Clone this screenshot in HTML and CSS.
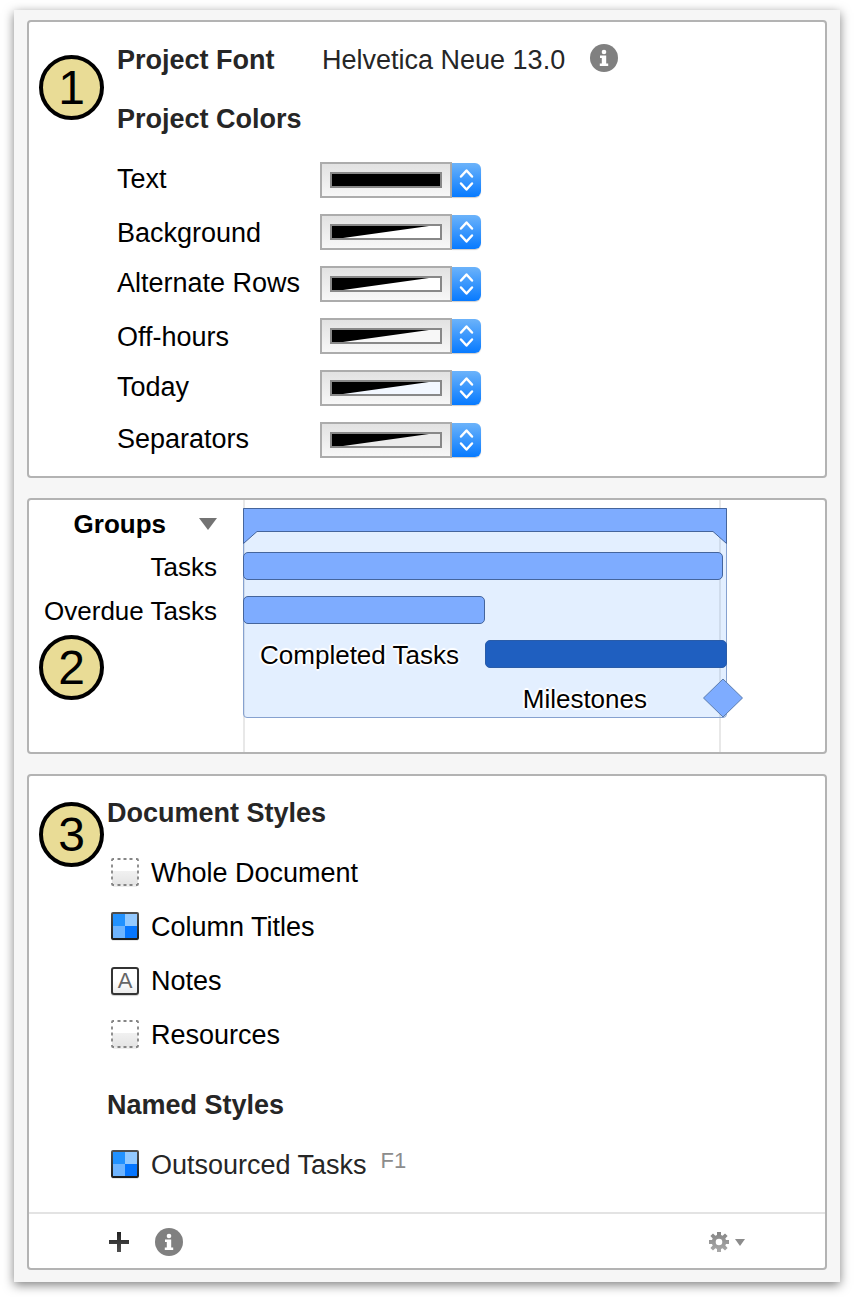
FILE: index.html
```html
<!DOCTYPE html>
<html lang="en">
<head>
    <meta charset="UTF-8">
    <meta name="viewport" content="width=device-width, initial-scale=1.0">
    <title>Project Styles</title>
    <link rel="stylesheet" href="styles.css">
</head>
<body>
    <!-- shared icons -->
    <svg class="defs" width="0" height="0" aria-hidden="true">
        <defs>
            <linearGradient id="fade" x1="0" y1="0" x2="0" y2="1">
                <stop offset="0.45" stop-color="#fff"/>
                <stop offset="0.46" stop-color="#f1f1f1"/>
                <stop offset="1" stop-color="#e4e4e4"/>
            </linearGradient>
            <linearGradient id="frame" x1="0" y1="0" x2="0" y2="1">
                <stop offset="0" stop-color="#505050"/>
                <stop offset="1" stop-color="#1c1c1c"/>
            </linearGradient>
            <linearGradient id="gear-fill" x1="0" y1="0" x2="0" y2="1">
                <stop offset="0" stop-color="#858585"/>
                <stop offset="1" stop-color="#aaa"/>
            </linearGradient>
            <linearGradient id="plus-fill" x1="0" y1="0" x2="0" y2="1">
                <stop offset="0" stop-color="#222"/>
                <stop offset="1" stop-color="#505050"/>
            </linearGradient>
        </defs>
        <symbol id="info" viewBox="0 0 28 28">
            <circle cx="14" cy="14" r="14" fill="#808080"/>
            <circle cx="14" cy="8" r="2.3" fill="#fff"/>
            <path d="M10 11.500h6.200v8h2V22H9.800v-2.500h2V14H10z" fill="#fff"/>
        </symbol>
        <symbol id="arrows" viewBox="0 0 29 34">
            <path d="M9 13.500l5.500-6 5.500 6M9 20.500l5.500 6 5.500-6" fill="none" stroke="#fff" stroke-width="2.500" stroke-linecap="round" stroke-linejoin="round"/>
        </symbol>
        <symbol id="ramp" viewBox="0 0 108 12">
            <path d="M0 0h97L11 12H0z"/>
        </symbol>
        <symbol id="style-none" viewBox="0 0 28 30">
            <rect x="2" y="26" width="24" height="3" fill="#eee"/>
            <rect x="1" y="1" width="26" height="26" rx="1" fill="url(#fade)"/>
            <path d="M1 3V2Q1 1 2 1H3M25 1h1q1 0 1 1v1M27 25v1q0 1-1 1h-1M3 27H2q-1 0-1-1v-1M6.500 1h3M12.500 1h3M18.500 1h3M6.500 27h3M12.500 27h3M18.500 27h3M1 6.500v3M1 12.500v3M1 18.500v3M27 6.500v3M27 12.500v3M27 18.500v3" fill="none" stroke="#858585" stroke-width="1.800"/>
        </symbol>
        <symbol id="style-fill" viewBox="0 0 28 30">
            <rect x="1" y="27" width="26" height="2" fill="#e8e8e8"/>
            <rect width="28" height="28" rx="2" fill="url(#frame)"/>
            <rect x="2" y="2" width="12" height="12" fill="#2292ff"/>
            <rect x="14" y="2" width="12" height="12" fill="#93c9ff"/>
            <rect x="2" y="14" width="12" height="12" fill="#6eb4ff"/>
            <rect x="14" y="14" width="12" height="12" fill="#0676ff"/>
        </symbol>
    </svg>

    <main class="window">
        <section class="panel project">
            <span class="badge badge-1">1</span>
            <div class="field">
                <h2>Project Font</h2>
                <span class="font-name">Helvetica Neue 13.0</span>
                <button class="icon-button" aria-label="Choose font"><svg class="info"><use href="#info"/></svg></button>
            </div>
            <h2 class="colors-title">Project Colors</h2>
            <div class="colors">
                <div class="field">
                    <label for="color-text">Text</label>
                    <div class="well"><div class="swatch swatch-text"></div></div>
                    <div class="stepper">
                        <select id="color-text"><option aria-label="Black"></option></select>
                        <svg><use href="#arrows"/></svg>
                    </div>
                </div>
                <div class="field field-low">
                    <label for="color-background">Background</label>
                    <div class="well"><div class="swatch"><svg><use href="#ramp"/></svg></div></div>
                    <div class="stepper">
                        <select id="color-background"><option aria-label="White"></option></select>
                        <svg><use href="#arrows"/></svg>
                    </div>
                </div>
                <div class="field">
                    <label for="color-rows">Alternate Rows</label>
                    <div class="well"><div class="swatch"><svg><use href="#ramp"/></svg></div></div>
                    <div class="stepper">
                        <select id="color-rows"><option aria-label="White"></option></select>
                        <svg><use href="#arrows"/></svg>
                    </div>
                </div>
                <div class="field field-low">
                    <label for="color-off">Off-hours</label>
                    <div class="well"><div class="swatch swatch-off"><svg><use href="#ramp"/></svg></div></div>
                    <div class="stepper">
                        <select id="color-off"><option aria-label="Light gray"></option></select>
                        <svg><use href="#arrows"/></svg>
                    </div>
                </div>
                <div class="field">
                    <label for="color-today">Today</label>
                    <div class="well"><div class="swatch swatch-today"><svg><use href="#ramp"/></svg></div></div>
                    <div class="stepper">
                        <select id="color-today"><option aria-label="Light blue"></option></select>
                        <svg><use href="#arrows"/></svg>
                    </div>
                </div>
                <div class="field">
                    <label for="color-separators">Separators</label>
                    <div class="well"><div class="swatch swatch-separators"><svg><use href="#ramp"/></svg></div></div>
                    <div class="stepper">
                        <select id="color-separators"><option aria-label="Gray"></option></select>
                        <svg><use href="#arrows"/></svg>
                    </div>
                </div>
            </div>
        </section>

        <section class="panel gantt">
            <span class="badge badge-2">2</span>
            <div class="gantt-labels">
                <div class="gantt-label group-label">
                    Groups
                    <svg width="18" height="12" viewBox="0 0 18 12"><path d="M0 0h18L9 12z" fill="#737373"/></svg>
                </div>
                <div class="gantt-label">Tasks</div>
                <div class="gantt-label">Overdue Tasks</div>
            </div>
            <div class="chart">
                <div class="gridlines"></div>
                <div class="group">
                    <svg class="group-bar" viewBox="0 0 484 36" preserveAspectRatio="none">
                        <path d="M.5 35.500V.5h483v35L470 23.500H14z" fill="#7eacff" stroke="#45659c"/>
                    </svg>
                </div>
                <div class="rows">
                    <div class="row"></div>
                    <div class="row"><div class="bar bar-task"></div></div>
                    <div class="row"><div class="bar"></div></div>
                    <div class="row"><span class="bar-label completed-label">Completed Tasks</span><div class="bar bar-done"></div></div>
                    <div class="row row-milestone">
                        <span class="bar-label">Milestones</span>
                        <svg class="milestone" viewBox="0 0 40 40"><path d="M20 1l19.500 19L20 39 .5 20z" fill="#7eacff" stroke="#5a7cae"/></svg>
                    </div>
                </div>
            </div>
        </section>

        <section class="panel styles">
            <span class="badge badge-3">3</span>
            <h2>Document Styles</h2>
            <ul>
                <li><svg class="style-icon"><use href="#style-none"/></svg>Whole Document</li>
                <li><svg class="style-icon"><use href="#style-fill"/></svg>Column Titles</li>
                <li><span class="text-icon">A</span>Notes</li>
                <li><svg class="style-icon"><use href="#style-none"/></svg>Resources</li>
            </ul>
            <h2>Named Styles</h2>
            <ul class="named">
                <li><svg class="style-icon"><use href="#style-fill"/></svg>Outsourced Tasks <kbd>F1</kbd></li>
            </ul>
            <footer>
                <button class="icon-button" aria-label="Add style">
                    <svg width="20" height="20" viewBox="0 0 20 20"><path d="M8 0h4v8h8v4h-8v8H8v-8H0V8h8z" fill="url(#plus-fill)"/></svg>
                </button>
                <button class="icon-button" aria-label="Style info"><svg class="info"><use href="#info"/></svg></button>
                <button class="icon-button gear" aria-label="Style actions">
                    <svg width="20" height="20" viewBox="0 0 20 20">
                        <path fill="url(#gear-fill)" fill-rule="evenodd" d="M8 0h4v3l1.600.7L16 1.400 18.600 4l-2.300 2.400L17 8h3v4h-3l-.7 1.600 2.300 2.400-2.600 2.600-2.400-2.300-1.600.7v3H8v-3l-1.600-.7L4 18.600 1.400 16l2.300-2.400L3 12H0V8h3l.7-1.600L1.400 4 4 1.400l2.400 2.300L8 3zM10 6.700a3.300 3.300 0 1 0 0 6.600 3.300 3.300 0 0 0 0-6.600z"/>
                    </svg>
                    <svg width="10" height="7" viewBox="0 0 10 7"><path d="M0 0h10L5 7z" fill="#8c8c8c"/></svg>
                </button>
            </footer>
        </section>
    </main>
</body>
</html>
```

FILE: styles.css
```css
* {
    box-sizing: border-box;
}
body {
    margin: 0;
    padding: 10px 14px 15px;
    background: #fff;
    font-family: "Liberation Sans", Arial, sans-serif;
    font-size: 27px;
    line-height: 30px;
    color: #000;
}
svg {
    display: block;
    flex: none;
}
.defs {
    position: absolute;
}
.window {
    display: flex;
    flex-direction: column;
    gap: 20px;
    padding: 10px 13px 12px;
    background: #f6f6f6;
    box-shadow: 0 3px 10px rgba(0, 0, 0, 0.5);
}
.panel {
    position: relative;
    background: #fff;
    border: 2px solid #b3b3b3;
    border-radius: 4px;
}
h2 {
    margin: 0;
    font-size: 27px;
    font-weight: bold;
    color: #262626;
}
.badge {
    position: absolute;
    left: 10px;
    width: 65px;
    height: 65px;
    border: 4px solid #000;
    border-radius: 50%;
    background: #e9dc96;
    font-size: 48px;
    line-height: 58px;
    text-align: center;
}
.badge-1 {
    top: 33px;
}
.badge-2 {
    top: 135px;
}
.badge-3 {
    top: 26px;
}
.icon-button {
    display: flex;
    align-items: center;
    padding: 0;
    border: none;
    background: none;
    cursor: pointer;
}
.info {
    width: 28px;
    height: 28px;
}

/* Project font and colors */
.project {
    padding: 22px 20px 18px 88px;
}
.field {
    display: flex;
    align-items: center;
}
.field-low {
    align-items: flex-end;
}
.field label,
.field h2 {
    width: 203px;
}
.field label {
    padding-bottom: 2px;
}
.font-name {
    margin-left: 2px;
    margin-right: 25px;
    color: #262626;
}
.field .info {
    margin-bottom: 3px;
}
.field h2,
.font-name {
    height: 30px;
}
.colors-title {
    margin: 29px 0 28px;
}
.colors {
    display: flex;
    flex-direction: column;
    gap: 16px;
}
.well {
    width: 132px;
    height: 36px;
    padding: 8px;
    border: 2px solid #acacac;
    background: linear-gradient(#e2e2e2, #f7f7f7);
}
.swatch {
    height: 16px;
    border: 2px solid #888;
    background: #fff;
}
.swatch svg {
    width: 108px;
    height: 12px;
}
.swatch-text {
    background: #000;
}
.swatch-off {
    background: #f7f7f7;
}
.swatch-today {
    background: #f2f7ff;
}
.swatch-separators {
    background: #ebebeb;
}
.stepper {
    position: relative;
    align-self: center;
    width: 29px;
    height: 34px;
}
.stepper select {
    display: block;
    width: 100%;
    height: 100%;
    appearance: none;
    border: none;
    border-radius: 0 6px 6px 0;
    background: linear-gradient(#6cb3fa, #077aff);
    box-shadow: 0 1px 1px rgba(0, 0, 0, 0.2);
    cursor: pointer;
}
.stepper svg {
    position: absolute;
    inset: 0;
    width: 29px;
    height: 34px;
    pointer-events: none;
}

/* Sample chart */
.gantt {
    display: grid;
    grid-template-columns: 214px 484fr 98fr;
    font-size: 26px;
}
.gantt-label {
    height: 44px;
    padding-right: 26px;
    line-height: 46px;
    text-align: right;
}
.group-label {
    display: flex;
    justify-content: flex-end;
    align-items: center;
    gap: 33px;
    padding-top: 3px;
    font-weight: bold;
}
.chart {
    display: grid;
}
.gridlines,
.group,
.rows {
    grid-area: 1 / 1;
}
.gridlines {
    margin-right: 6px;
    border: solid #e8e8e8;
    border-width: 0 2px;
}
.group {
    margin: 8px 0 34px;
    border: 1px solid #86a1cf;
    border-radius: 0 0 4px 4px;
    background: rgba(115, 175, 255, 0.2);
}
.group-bar {
    width: calc(100% + 2px);
    height: 36px;
    margin: -1px;
}
.rows {
    padding-bottom: 32px;
    z-index: 1;
}
.row {
    display: flex;
    align-items: center;
    height: 44px;
}
.bar {
    width: 50%;
    height: 28px;
    border: 1px solid #45659c;
    border-radius: 5px;
    background: #7eacff;
}
.bar-task {
    width: calc(100% - 4px);
}
.bar-done {
    border-color: #2a5ca8;
    background: #1f5fc0;
}
.bar-label {
    padding-top: 2px;
    text-shadow: 0 0 2px #fff, 0 0 2px #fff, 2px 0 1px #fff, -2px 0 1px #fff, 0 2px 1px #fff, 0 -2px 1px #fff;
}
.completed-label {
    width: 50%;
    padding-right: 26px;
    text-align: right;
}
.row-milestone {
    justify-content: flex-end;
    gap: 56px;
}
.milestone {
    width: 40px;
    height: 40px;
    margin-right: -16px;
}

/* Style list */
.styles {
    padding-top: 22px;
}
.styles h2 {
    padding-left: 78px;
}
.styles ul {
    margin: 18px 0 28px;
    padding: 0 0 0 82px;
    list-style: none;
}
.styles .named {
    margin-bottom: 20px;
    color: #262626;
}
.styles li {
    display: flex;
    align-items: center;
    gap: 12px;
    height: 54px;
}
.style-icon {
    width: 28px;
    height: 30px;
}
.text-icon {
    width: 28px;
    height: 28px;
    border: 2px solid #333;
    border-radius: 3px;
    background: linear-gradient(#fff 50%, #ececec);
    box-shadow: 0 1px 1px rgba(0, 0, 0, 0.2);
    font-size: 22px;
    line-height: 24px;
    text-align: center;
    color: #666;
}
kbd {
    padding: 0 0 8px 2px;
    font-family: inherit;
    font-size: 22px;
    color: #8c8c8c;
}
footer {
    display: flex;
    align-items: center;
    gap: 26px;
    height: 56px;
    padding: 2px 80px 0;
    border-top: 2px solid #e3e3e3;
}
.gear {
    gap: 6px;
    margin-left: auto;
}
```
